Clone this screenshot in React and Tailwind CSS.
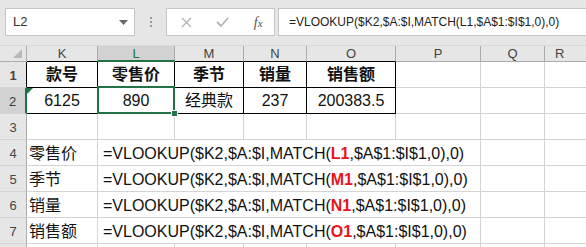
import React from "react";

const FONT = "font-['Liberation_Sans','Noto_Sans_CJK_SC',sans-serif]";

function Formula({ ref1 }) {
  return (
    <span className="whitespace-nowrap">
      =VLOOKUP($K2,$A:$I,MATCH(
      <span className="font-bold text-[#e8141b]">{ref1}</span>
      ,$A$1:$I$1,0),0)
    </span>
  );
}

function RowHead({ n, selected, dark }) {
  return (
    <div
      className={
        "w-[27px] h-full shrink-0 flex items-end justify-center pb-[2px] text-[13px] border-b border-[#d4d4d4] " +
        (selected
          ? "bg-[#d2d2d2] text-[#3c3c3c] border-r-2 border-r-[#217346]"
          : dark
          ? "bg-[#e6e6e6] text-[#444] border-r border-r-black"
          : "bg-[#e6e6e6] text-[#444] border-r border-r-[#ababab]")
      }
    >
      {n}
    </div>
  );
}

function EmptyTail() {
  return (
    <>
      <div className="w-[85px] h-full shrink-0 border-r border-b border-[#d4d4d4]" />
      <div className="w-[64px] h-full shrink-0 border-r border-b border-[#d4d4d4]" />
      <div className="flex-1 h-full border-b border-[#d4d4d4]" />
    </>
  );
}

function FormulaRow({ n, label, ref1 }) {
  return (
    <div className="flex h-[26px]">
      <RowHead n={n} />
      <div className="w-[71px] h-full shrink-0 flex items-center pl-[2px] pt-[2px] text-[16px] border-r border-b border-[#d4d4d4]">
        {label}
      </div>
      <div className="w-[383px] h-full shrink-0 flex items-center pl-[5px] pt-[2px] text-[16px] border-r border-b border-[#d4d4d4] overflow-visible">
        <Formula ref1={ref1} />
      </div>
      <div className="w-[64px] h-full shrink-0 border-r border-b border-[#d4d4d4]" />
      <div className="flex-1 h-full border-b border-[#d4d4d4]" />
    </div>
  );
}

export default function App() {
  return (
    <div className={"w-[586px] h-[247px] overflow-hidden bg-white text-[#111] " + FONT}>
      {/* Formula bar */}
      <div className="h-[46px] bg-[#e6e6e6] flex items-start pt-[8px] border-b border-[#d9d9d9]">
        <div className="ml-[5px] w-[130px] h-[28px] shrink-0 bg-white border border-[#c6c6c6] flex items-center justify-between pl-[7px] pr-[6px] text-[13px] text-[#333]">
          <span>L2</span>
          <svg width="9" height="5" viewBox="0 0 9 5">
            <path d="M0 0 L9 0 L4.5 5 Z" fill="#6b6b6b" />
          </svg>
        </div>
        <div className="w-[31px] h-[28px] shrink-0 flex flex-col items-center justify-center gap-[2px]">
          <div className="w-[2px] h-[2px] bg-[#9a9a9a]" />
          <div className="w-[2px] h-[2px] bg-[#9a9a9a]" />
          <div className="w-[2px] h-[2px] bg-[#9a9a9a]" />
        </div>
        <div className="w-[109px] h-[28px] shrink-0 bg-white border border-[#c6c6c6] flex items-center">
          <div className="w-[36px] flex justify-center pl-[4px]">
            <svg width="11" height="11" viewBox="0 0 11 11">
              <path d="M1 1 L10 10 M10 1 L1 10" stroke="#b4b4b4" strokeWidth="1.4" />
            </svg>
          </div>
          <div className="w-[36px] flex justify-center pl-[4px]">
            <svg width="13" height="10" viewBox="0 0 13 10">
              <path d="M1 5 L5 9 L12 1" stroke="#b4b4b4" strokeWidth="1.8" fill="none" />
            </svg>
          </div>
          <div className="w-[36px] flex justify-center pl-[4px] font-['Liberation_Serif',serif] italic text-[14px] text-[#555]">
            <span>
              f<span className="text-[11px]">x</span>
            </span>
          </div>
        </div>
        <div className="ml-[3px] flex-1 h-[28px] bg-white border border-[#c6c6c6] border-r-0 flex items-center pl-[10px] text-[12px] text-[#222] whitespace-nowrap overflow-hidden">
          =VLOOKUP($K2,$A:$I,MATCH(L1,$A$1:$I$1,0),0)
        </div>
      </div>

      {/* Column headers */}
      <div className="flex h-[16px] bg-[#e6e6e6] text-[13px] text-[#444]">
        <div className="w-[27px] h-full shrink-0 border-r border-b border-[#ababab] flex items-end justify-end pr-[4px] pb-[3px]">
          <svg width="9" height="9" viewBox="0 0 9 9">
            <path d="M9 0 L9 9 L0 9 Z" fill="#b8b8b8" />
          </svg>
        </div>
        <div className="w-[71px] h-full shrink-0 border-r border-r-[#ababab] border-b border-b-black flex items-center justify-center leading-none">K</div>
        <div className="w-[77px] h-full shrink-0 bg-[#d2d2d2] text-[#217346] border-r border-r-[#ababab] border-b-2 border-b-[#217346] flex items-center justify-center leading-none pt-[1px]">L</div>
        <div className="w-[69px] h-full shrink-0 border-r border-r-[#ababab] border-b border-b-black flex items-center justify-center leading-none">M</div>
        <div className="w-[63px] h-full shrink-0 border-r border-r-[#ababab] border-b border-b-black flex items-center justify-center leading-none">N</div>
        <div className="w-[89px] h-full shrink-0 border-r border-r-[#ababab] border-b border-b-black flex items-center justify-center leading-none">O</div>
        <div className="w-[85px] h-full shrink-0 border-r border-b border-[#ababab] flex items-center justify-center leading-none">P</div>
        <div className="w-[64px] h-full shrink-0 border-r border-b border-[#ababab] flex items-center justify-center leading-none">Q</div>
        <div className="flex-1 h-full border-b border-[#ababab] flex items-center pl-[10px] leading-none">R</div>
      </div>

      {/* Row 1 */}
      <div className="flex h-[26px] text-[16px] font-bold">
        <RowHead n="1" dark />
        <div className="w-[71px] h-full shrink-0 flex items-center justify-center pt-[1px] border-r border-b border-black">款号</div>
        <div className="w-[77px] h-full shrink-0 flex items-center justify-center pt-[1px] border-r border-b border-black">零售价</div>
        <div className="w-[69px] h-full shrink-0 flex items-center justify-center pt-[1px] border-r border-b border-black">季节</div>
        <div className="w-[63px] h-full shrink-0 flex items-center justify-center pt-[1px] border-r border-b border-black">销量</div>
        <div className="w-[89px] h-full shrink-0 flex items-center justify-center pt-[1px] border-r border-b border-black">销售额</div>
        <div className="w-[85px] h-full shrink-0 border-r border-b border-[#d4d4d4]" />
        <div className="w-[64px] h-full shrink-0 border-r border-b border-[#d4d4d4]" />
        <div className="flex-1 h-full border-b border-[#d4d4d4]" />
      </div>

      {/* Row 2 */}
      <div className="flex h-[26px] text-[16px]">
        <RowHead n="2" selected />
        <div className="relative w-[71px] h-full shrink-0 flex items-center justify-center pt-[1px] border-r border-b border-black">
          <div className="absolute top-0 left-0 w-0 h-0 border-t-[6px] border-r-[6px] border-t-[#217346] border-r-transparent" />
          6125
        </div>
        <div className="relative w-[77px] h-full shrink-0 flex items-center justify-center pt-[1px] border-r border-b border-black">
          890
          <div className="absolute -left-[1px] -top-[2px] -right-[1px] -bottom-[1px] border-2 border-[#217346]" />
          <div className="absolute -right-[4px] -bottom-[4px] w-[7px] h-[7px] bg-[#217346] border border-white" />
        </div>
        <div className="w-[69px] h-full shrink-0 flex items-center justify-center pt-[1px] border-r border-b border-black">经典款</div>
        <div className="w-[63px] h-full shrink-0 flex items-center justify-center pt-[1px] border-r border-b border-black">237</div>
        <div className="w-[89px] h-full shrink-0 flex items-center justify-center pt-[1px] border-r border-b border-black">200383.5</div>
        <div className="w-[85px] h-full shrink-0 border-r border-b border-[#d4d4d4]" />
        <div className="w-[64px] h-full shrink-0 border-r border-b border-[#d4d4d4]" />
        <div className="flex-1 h-full border-b border-[#d4d4d4]" />
      </div>

      {/* Row 3 */}
      <div className="flex h-[26px]">
        <RowHead n="3" />
        <div className="w-[71px] h-full shrink-0 border-r border-b border-[#d4d4d4]" />
        <div className="w-[77px] h-full shrink-0 border-r border-b border-[#d4d4d4]" />
        <div className="w-[69px] h-full shrink-0 border-r border-b border-[#d4d4d4]" />
        <div className="w-[63px] h-full shrink-0 border-r border-b border-[#d4d4d4]" />
        <div className="w-[89px] h-full shrink-0 border-r border-b border-[#d4d4d4]" />
        <EmptyTail />
      </div>

      <FormulaRow n="4" label="零售价" ref1="L1" />
      <FormulaRow n="5" label="季节" ref1="M1" />
      <FormulaRow n="6" label="销量" ref1="N1" />
      <FormulaRow n="7" label="销售额" ref1="O1" />

      {/* Row 8 (only its top edge is in view) */}
      <div className="flex h-[26px]">
        <RowHead n="" />
        <div className="w-[71px] h-full shrink-0 border-r border-b border-[#d4d4d4]" />
        <div className="w-[77px] h-full shrink-0 border-r border-b border-[#d4d4d4]" />
        <div className="w-[69px] h-full shrink-0 border-r border-b border-[#d4d4d4]" />
        <div className="w-[63px] h-full shrink-0 border-r border-b border-[#d4d4d4]" />
        <div className="w-[89px] h-full shrink-0 border-r border-b border-[#d4d4d4]" />
        <EmptyTail />
      </div>
    </div>
  );
}
